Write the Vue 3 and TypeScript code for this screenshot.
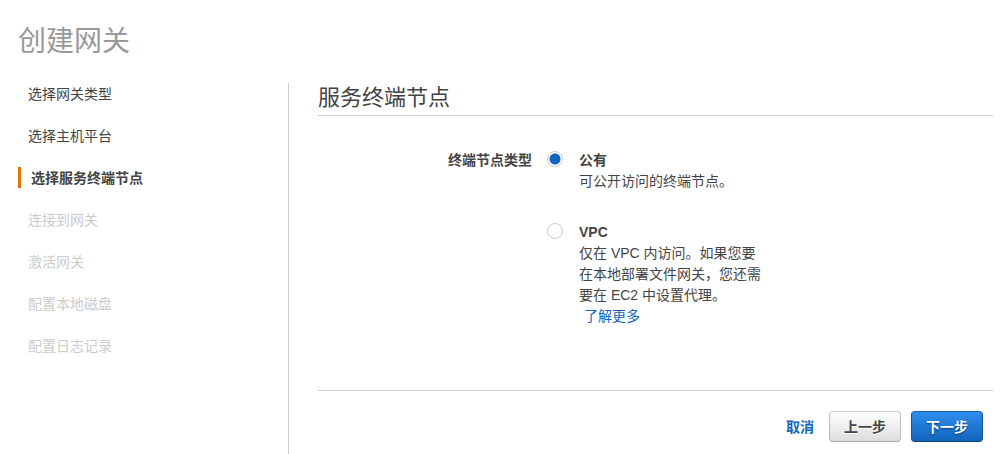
<script setup lang="ts">
import { ref } from 'vue'

type StepState = 'done' | 'current' | 'pending'

interface Step {
  label: string
  state: StepState
}

const steps: Step[] = [
  { label: '选择网关类型', state: 'done' },
  { label: '选择主机平台', state: 'done' },
  { label: '选择服务终端节点', state: 'current' },
  { label: '连接到网关', state: 'pending' },
  { label: '激活网关', state: 'pending' },
  { label: '配置本地磁盘', state: 'pending' },
  { label: '配置日志记录', state: 'pending' },
]

const endpointType = ref<'public' | 'vpc'>('public')
</script>

<template>
  <div class="wizard" lang="zh-CN">
    <h1 class="title">创建网关</h1>
    <div class="body">
      <nav class="sidebar" aria-label="创建网关">
        <ol class="steps">
          <li
            v-for="step in steps"
            :key="step.label"
            class="step"
            :class="step.state"
            :aria-current="step.state === 'current' ? 'step' : undefined"
          >
            {{ step.label }}
          </li>
        </ol>
      </nav>

      <main class="content">
        <h2 class="heading">服务终端节点</h2>

        <div class="field" role="radiogroup" aria-labelledby="type-label">
          <div id="type-label" class="field-label">终端节点类型</div>
          <div class="options">
            <div class="option">
              <input id="public" v-model="endpointType" class="radio" type="radio" name="endpoint" value="public" />
              <div class="option-text">
                <label class="option-name" for="public">公有</label>
                <p class="description">可公开访问的终端节点。</p>
              </div>
            </div>
            <div class="option">
              <input id="vpc" v-model="endpointType" class="radio" type="radio" name="endpoint" value="vpc" />
              <div class="option-text">
                <label class="option-name" for="vpc">VPC</label>
                <p class="description">仅在 VPC 内访问。如果您要在本地部署文件网关，您还需要在 EC2 中设置代理。</p>
                <a class="learn-more" href="#">了解更多</a>
              </div>
            </div>
          </div>
        </div>

        <footer class="actions">
          <a class="cancel" href="#">取消</a>
          <button class="button" type="button">上一步</button>
          <button class="button primary" type="button">下一步</button>
        </footer>
      </main>
    </div>
  </div>
</template>

<style>
body {
  background: #fff;
}
</style>

<style scoped>
.wizard {
  box-sizing: border-box;
  display: flex;
  flex-direction: column;
  min-height: 100vh;
  padding: 21px 9px 0 18px;
  color: #444;
  font-family: "Liberation Sans", Arial, "Noto Sans CJK SC", sans-serif;
  font-size: 14px;
  line-height: 21px;
}

.title {
  margin: 0 0 20px;
  color: #999;
  font-size: 28px;
  font-weight: 400;
  line-height: 42px;
}

.body {
  display: flex;
  flex: 1;
}

.sidebar {
  flex: 0 0 270px;
  border-right: 1px solid #ccc;
}

.steps {
  display: flex;
  flex-direction: column;
  gap: 21px;
  margin: 0;
  padding: 0;
  list-style: none;
}

.step {
  padding: 2px 0 0 10px;
  line-height: 19px;
}

.step.current {
  border-left: 3px solid #e07700;
  font-weight: 700;
}

.step.pending {
  color: #ccc;
}

.content {
  flex: 1;
  min-width: 0;
  padding-left: 29px;
}

.heading {
  margin: 0;
  padding-bottom: 2px;
  border-bottom: 1px solid #ccc;
  font-size: 22px;
  font-weight: 400;
  line-height: 30px;
}

.field {
  display: flex;
  gap: 15px;
  padding: 34px 0 63px;
}

.field-label {
  flex: 0 0 214px;
  font-weight: 700;
  text-align: right;
}

.options {
  display: flex;
  flex-direction: column;
  gap: 30px;
}

.option {
  display: flex;
  align-items: flex-start;
  gap: 16px;
}

.radio {
  box-sizing: border-box;
  flex: none;
  width: 16px;
  height: 16px;
  margin: 1px 0 0;
  appearance: none;
  border: 1px solid #ccc;
  border-radius: 50%;
  background: #fff;
}

.radio:checked {
  background: radial-gradient(circle, #1166bb 5px, #fff 6px) padding-box;
}

.option-text {
  width: 186px;
}

.option-name {
  display: block;
  font-weight: 700;
}

.description {
  margin: 0;
}

.learn-more {
  display: block;
  margin-left: 5px;
  color: #1166bb;
  text-decoration: none;
}

.actions {
  display: flex;
  align-items: center;
  justify-content: flex-end;
  gap: 10px;
  padding: 20px 10px 12px;
  border-top: 1px solid #ccc;
}

.cancel {
  margin-right: 5px;
  padding-top: 2px;
  color: #1166bb;
  font-weight: 700;
  text-decoration: none;
}

.button {
  box-sizing: border-box;
  height: 31px;
  margin: 0;
  padding: 2px 14px 0;
  border: 1px solid #bbb;
  border-color: #ccc #bbb #aaa;
  border-radius: 4px;
  background: linear-gradient(#fff, #ddd);
  color: #444;
  font: inherit;
  font-weight: 700;
  text-shadow: 0 1px 0 #fff;
}

.button.primary {
  border-color: #1a5fa8 #15528f #0c3f75;
  background: linear-gradient(#2e8ded, #1166bb);
  color: #fff;
  text-shadow: 0 1px 2px #073a70;
}
</style>
